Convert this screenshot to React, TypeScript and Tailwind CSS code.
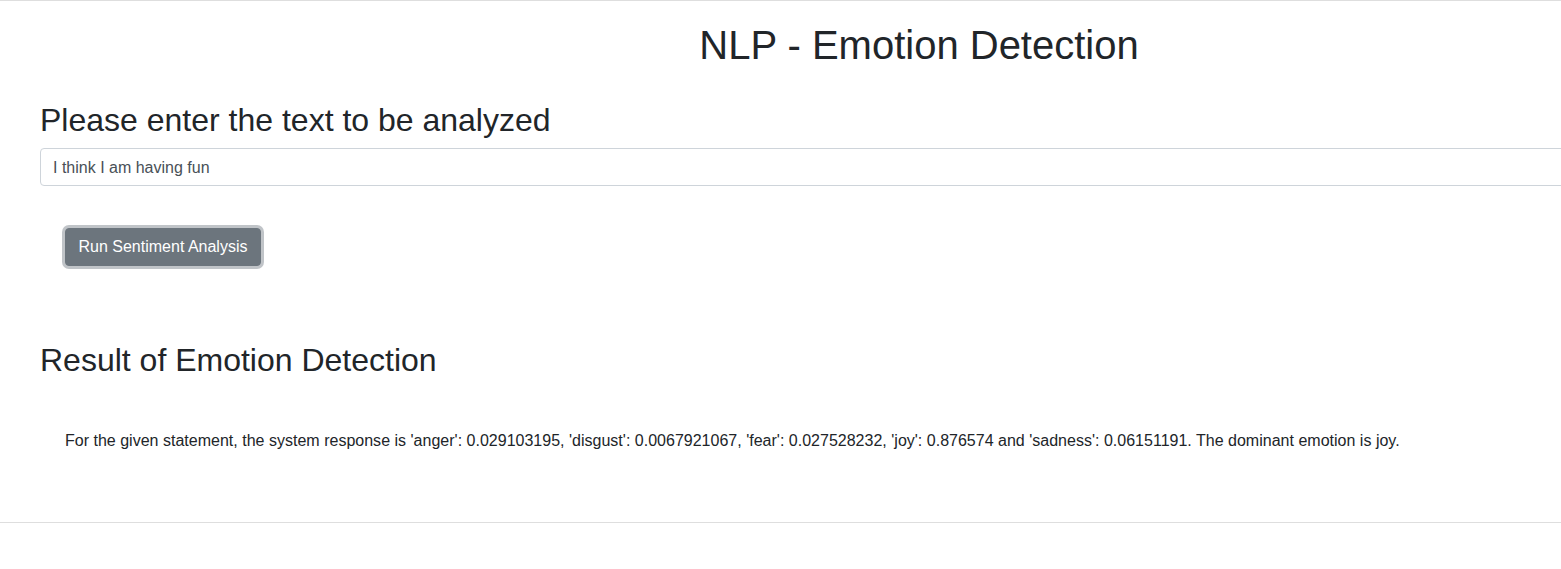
export default function App() {
  const result =
    "For the given statement, the system response is 'anger': 0.029103195, 'disgust': 0.0067921067, 'fear': 0.027528232, 'joy': 0.876574 and 'sadness': 0.06151191. The dominant emotion is joy.";

  return (
    <div
      className="w-full overflow-hidden bg-white text-[#212529]"
      style={{ fontFamily: '"Liberation Sans", Arial, sans-serif' }}
    >
      <hr className="border-0 border-t border-[#dedede]" />

      <h1 className="mt-[20px] pl-[277px] text-center text-[40px] leading-[48px] font-normal">
        NLP - Emotion Detection
      </h1>

      <div className="pl-[40px]">
        <h2 className="mt-[32px] mb-[9px] text-[32px] leading-[38.4px] font-normal">
          Please enter the text to be analyzed
        </h2>
        <input
          type="text"
          defaultValue="I think I am having fun"
          className="block h-[38px] w-[1600px] rounded-[4px] border border-[#ced4da] px-[12px] pt-[1px] text-[16px] text-[#495057] outline-none"
        />

        <div className="mt-[42px] pl-[25px]">
          <button
            type="button"
            className="h-[38px] rounded-[4px] border border-[#6c757d] bg-[#6c757d] px-[12.5px] text-[16px] text-white shadow-[0_0_0_3px_rgba(130,138,145,0.5)]"
          >
            Run Sentiment Analysis
          </button>
        </div>

        <h2 className="mt-[75px] text-[32px] leading-[38.4px] font-normal">
          Result of Emotion Detection
        </h2>

        <p className="mt-[49px] pl-[25px] text-[16px] leading-[24px] tracking-[0.01px]">{result}</p>
      </div>

      <hr className="mt-[69px] mb-[46px] border-0 border-t border-[#dedede]" />
    </div>
  );
}
